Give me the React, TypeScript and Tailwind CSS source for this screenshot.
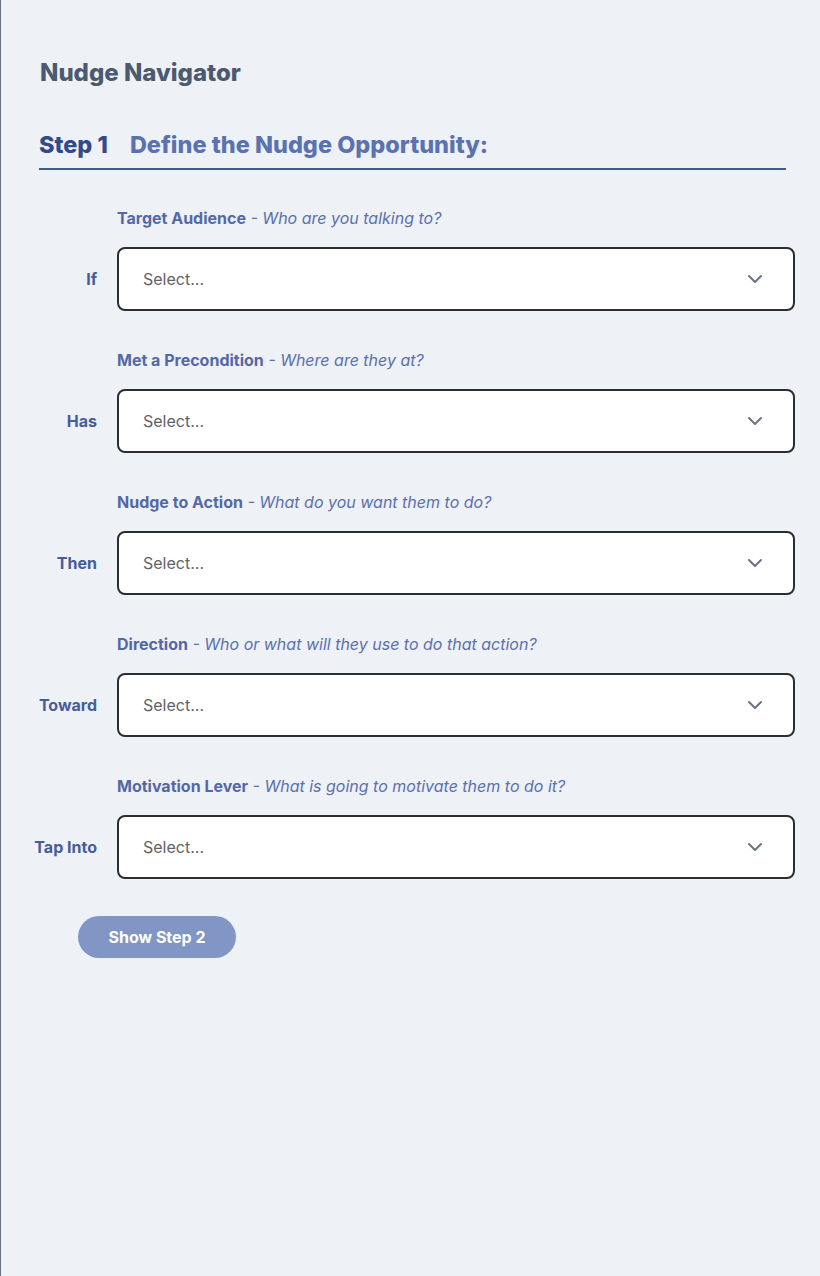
import { ChevronDown } from "lucide-react";

const fields = [
  { side: "If", title: "Target Audience", hint: "Who are you talking to?" },
  { side: "Has", title: "Met a Precondition", hint: "Where are they at?" },
  { side: "Then", title: "Nudge to Action", hint: "What do you want them to do?" },
  { side: "Toward", title: "Direction", hint: "Who or what will they use to do that action?" },
  { side: "Tap Into", title: "Motivation Lever", hint: "What is going to motivate them to do it?" },
];

function Field({ side, title, hint }: { side: string; title: string; hint: string }) {
  return (
    <div className="mb-[39px]">
      <p className="ml-[116px] mb-[19px] h-5 text-[16px] leading-5 text-[#5368a5]">
        <span className="font-bold">{title}</span>
        <span className="italic text-[#5b70ae]"> - {hint}</span>
      </p>
      <div className="flex items-center">
        <div className="w-[96px] text-right text-[16px] font-bold text-[#475c99]">{side}</div>
        <div className="ml-5 flex h-16 w-[678px] items-center justify-between rounded-lg border-2 border-[#2b2d33] bg-white pl-6 pr-[26px]">
          <span className="text-[16px] text-[#5f6368]">Select...</span>
          <ChevronDown className="h-6 w-6 text-[#6b7280]" strokeWidth={2} />
        </div>
      </div>
    </div>
  );
}

export default function App() {
  return (
    <div
      className="min-h-[1276px] border-l border-[#6b7280] bg-[#eef1f6]"
      style={{ fontFamily: "Inter, 'Noto Sans', sans-serif" }}
    >
      <div className="pt-[59px]">
        <h1 className="ml-[39px] h-7 text-[24px] font-extrabold leading-7 text-[#4b5a6e]">Nudge Navigator</h1>
        <div className="ml-[38px] mt-[44px] w-[747px] border-b-2 border-[#435a8e] pb-[9px]">
          <h2 className="flex h-7 items-center gap-[22px] text-[23.5px] font-extrabold leading-7">
            <span className="text-[#33498a]">Step 1</span>
            <span className="text-[#5a72b0]">Define the Nudge Opportunity:</span>
          </h2>
        </div>
        <div className="mt-[38px]">
          {fields.map((f) => (
            <Field key={f.side} {...f} />
          ))}
        </div>
        <button className="-mt-[2px] ml-[77px] h-[42px] w-[158px] rounded-full bg-[#8196c4] text-[16px] font-bold text-white">
          Show Step 2
        </button>
      </div>
    </div>
  );
}
